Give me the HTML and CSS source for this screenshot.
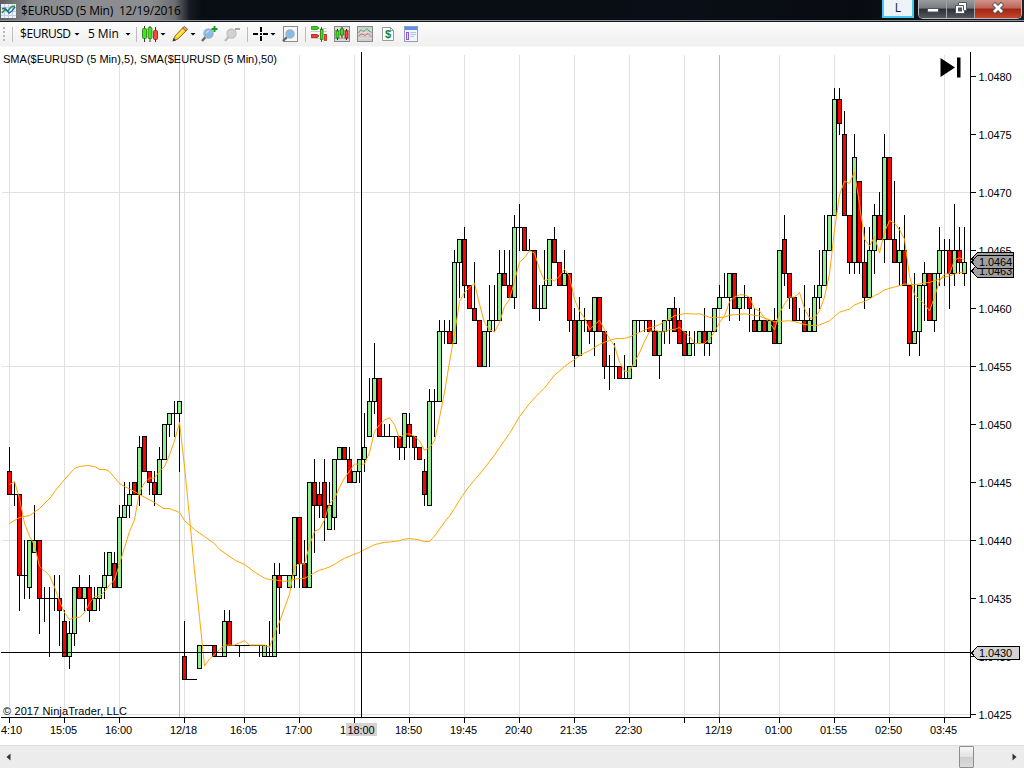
FILE: index.html
```html
<!DOCTYPE html>
<html lang="en">
<head>
    <meta charset="UTF-8">
    <meta name="viewport" content="width=device-width, initial-scale=1.0">
    <link rel="stylesheet" href="styles.css">
    <title>$EURUSD (5 Min) 12/19/2016</title>
</head>
<body>
    <div id="window">
        <div class="titlebar">
            <svg class="app-icon" width="15" height="14" viewBox="0 0 15 14">
                <rect width="15" height="14" fill="#eef2f8"/>
                <path d="M0 3.5H15M0 7.5H15M0 11.5H15M3.5 0V14M7.5 0V14M11.5 0V14" stroke="#c5cede" fill="none"/>
                <path d="M1 9L4 5.500L7 7L10 3L14 2" stroke="#2f9a3c" stroke-width="1.600" fill="none"/>
                <path d="M1 5L4 4L8 9L11 7L14 3" stroke="#2468b8" stroke-width="1.400" fill="none"/>
            </svg>
            <span class="title">$EURUSD (5 Min)&nbsp; 12/19/2016</span>
            <button class="link-btn">L</button>
            <div class="win-btns">
                <button class="win-btn"><svg width="12" height="14" viewBox="0 0 12 14"><rect x=".5" y="7.500" width="11" height="3.500" fill="#fff" stroke="#50545c"/></svg></button>
                <button class="win-btn"><svg width="12" height="14" viewBox="0 0 12 14"><path d="M3.5 1.5H11.500V9.500H9.500V12.500H.5V4.500H3.500Z" fill="#fff" stroke="#50545c"/><path d="M3.500 4.500H8.500V9.500" fill="none" stroke="#50545c"/><rect x="3.500" y="7" width="3" height="3" fill="#555" stroke="#50545c"/></svg></button>
                <button class="win-btn close"><svg width="12" height="14" viewBox="0 0 12 14"><path d="M1.500 2.500L10.500 11.500M10.500 2.500L1.500 11.500" stroke="#50545c" stroke-width="4.600"/><path d="M2 3L10 11M10 3L2 11" stroke="#fff" stroke-width="2.800"/></svg></button>
            </div>
        </div>
        <div class="toolbar">
            <span class="grip"></span>
            <span class="sep"></span>
            <span class="pick instrument">$EURUSD</span><i class="caret"></i>
            <span class="pick interval">5 Min</span><i class="caret"></i>
            <span class="sep sep-wide"></span>
            <svg class="icon" width="16" height="16" viewBox="0 0 16 16">
                <path d="M2.5 0V16M8 0V16M13.500 1V16" stroke="#333"/>
                <rect x=".5" y="2.500" width="4" height="10" rx="1" fill="#46e01c" stroke="#1f7a10" stroke-width=".8"/>
                <rect x="6" y="1.500" width="4" height="11" rx="1" fill="#46e01c" stroke="#1f7a10" stroke-width=".8"/>
                <rect x="11.500" y="4.500" width="4" height="9" rx="1" fill="#f5483c" stroke="#a01810" stroke-width=".8"/>
            </svg><i class="caret tight"></i>
            <svg class="icon pencil" width="16" height="16" viewBox="0 0 16 16">
                <path d="M1.500 14.500L3 10L11 1.500L14.500 4.500L6 13Z" fill="#ffcf14" stroke="#94702a"/>
                <path d="M4.500 11L12 3.500" stroke="#ffec70" stroke-width="1.500"/>
                <path d="M10.500 2L12.500 .5L15.500 3L14 5Z" fill="#e8a080" stroke="#94604c"/>
                <path d="M.5 15.500L1.500 12L4 14.500Z" fill="#333"/>
            </svg><i class="caret tight"></i>
            <svg class="icon zoom-in" width="17" height="16" viewBox="0 0 17 16">
                <path d="M1 15L5 10.500" stroke="#666" stroke-width="2.400"/>
                <circle cx="7.500" cy="7.500" r="4.500" fill="#84bdec" stroke="#9fb1c2" stroke-width="1.500"/>
                <path d="M5.500 7A3 3 0 0 1 8 4.800" stroke="#e3f3ff" fill="none"/>
                <path d="M13.500 0V6M10.500 3H16.500" stroke="#10a020" stroke-width="2"/>
            </svg>
            <svg class="icon zoom-out" width="17" height="16" viewBox="0 0 17 16">
                <path d="M1 15L5 10.500" stroke="#bbb" stroke-width="2.200"/>
                <circle cx="7.500" cy="7.500" r="4.500" fill="#d2d2d2" stroke="#c4c4c4" stroke-width="1.500"/>
                <path d="M11 3H16" stroke="#aaa" stroke-width="2"/>
            </svg>
            <span class="sep sep-cross"></span>
            <svg class="icon" width="15" height="16" viewBox="0 0 15 16">
                <path d="M8 1V6M8 10V15M0 8H5M10 8H15" stroke="#000" stroke-width="2"/>
                <rect x="7" y="7" width="2" height="2"/>
            </svg><i class="caret tight"></i>
            <svg class="icon lens" width="16" height="16" viewBox="0 0 16 16">
                <rect x="1.500" y=".5" width="14" height="15" fill="#f7f7f7" stroke="#8c8c8c"/>
                <path d="M1 15L5 11" stroke="#666" stroke-width="2.400"/>
                <circle cx="8" cy="8" r="4" fill="#84bdec" stroke="#9fb1c2" stroke-width="1.500"/>
            </svg>
            <span class="sep sep-last"></span>
            <svg class="icon" width="16" height="16" viewBox="0 0 16 16">
                <path d="M8 2.500H16M0 5.500H16M8 8.500H16M0 12.500H16" stroke="#ccc"/>
                <path d="M.5 .5H6L8 2L6 3.500H.5Z" fill="#3bd01c" stroke="#218a14" stroke-width=".8"/>
                <path d="M.5 8.500H6L8 10L6 11.500H.5Z" fill="#f04030" stroke="#a01810" stroke-width=".8"/>
                <path d="M10.500 1V16" stroke="#555"/>
                <rect x="9.500" y="3.500" width="2.500" height="10" fill="#46e01c" stroke="#1f7a10" stroke-width=".8"/>
                <rect x="13.500" y="8.500" width="2" height="6" fill="#f5483c" stroke="#c03020" stroke-width=".8"/>
            </svg>
            <svg class="icon" width="16" height="16" viewBox="0 0 16 16">
                <rect x=".5" y=".5" width="15" height="15" fill="#dadada" stroke="#888"/>
                <path d="M1 4.500H15M1 8.500H15M1 12.500H15" stroke="#b0b0b0"/>
                <path d="M3.500 3V14M8 1V12M12.500 3V14" stroke="#222"/>
                <rect x="2" y="5" width="3" height="7" fill="#46e01c" stroke="#1f7a10" stroke-width=".8"/>
                <rect x="6.500" y="3" width="3" height="6" fill="#46e01c" stroke="#1f7a10" stroke-width=".8"/>
                <rect x="11" y="5" width="3" height="7" fill="#f5483c" stroke="#a01810" stroke-width=".8"/>
            </svg>
            <svg class="icon" width="16" height="16" viewBox="0 0 16 16">
                <rect x=".5" y=".5" width="15" height="15" fill="#cfcfcf" stroke="#8a8a8a"/>
                <path d="M1 3.500H15M1 6.500H15M1 9.500H15M1 12.500H15" stroke="#dadada"/>
                <path d="M1.500 7L4 3.500L6 5.500L8 4.500L10 2.500L12 5L14.500 6.500" stroke="#46b070" fill="none"/>
                <path d="M1.500 10L5 8L8 9.500L11 7.500L14.500 11" stroke="#e06060" fill="none"/>
            </svg>
            <svg class="icon dollar" width="12" height="16" viewBox="0 0 12 16">
                <path d="M.5 1.500H8.500L11.500 4.500V14.500H.5Z" fill="#fff" stroke="#999"/>
                <path d="M8.500 1.500V4.500H11.500" fill="none" stroke="#999"/>
                <text x="6" y="12" text-anchor="middle">$</text>
            </svg>
            <svg class="icon" width="14" height="16" viewBox="0 0 14 16">
                <rect x=".5" y=".5" width="13" height="15" fill="#f2f5fc" stroke="#8c9cc4"/>
                <rect x="1" y="1" width="12" height="3" fill="#5b8fe8"/>
                <rect x="2.500" y="6.500" width="2" height="7" fill="#e4d4ff" stroke="#8a5ae0"/>
                <path d="M6.500 6.500H12M6.500 8.500H12M6.500 10.500H10" stroke="#a9c4ee"/>
            </svg>
        </div>
        <svg id="chart" width="1024" height="697" viewBox="0 48 1024 697"></svg>
        <div class="scrollbar">
            <svg class="arrow-left" width="5" height="8" viewBox="0 0 5 8"><path d="M4.500 .5V7.500L.5 4Z" fill="#333"/></svg>
            <span class="thumb"></span>
            <svg class="arrow-right" width="5" height="8" viewBox="0 0 5 8"><path d="M.5 .5V7.500L4.500 4Z" fill="#333"/></svg>
        </div>
    </div>
    <script src="chart.js"></script>
</body>
</html>
```

FILE: styles.css
```css
body {
    margin: 0;
    background: #fff;
    font-family: "Liberation Sans", Arial, sans-serif;
    overflow: hidden;
}
button {
    margin: 0;
    padding: 0;
    font-family: inherit;
}
#window {
    width: 1024px;
    height: 768px;
    display: flex;
    flex-direction: column;
}

/* title bar */
.titlebar {
    box-sizing: border-box;
    height: 22px;
    display: flex;
    align-items: flex-start;
    padding-left: 1px;
    background: linear-gradient(90deg, #5d5f62 0, #8b8d90 30px, #8b8d90 150px, #6b6e71 175px, rgba(30, 34, 40, 0.6) 190px, rgba(8, 12, 18, 0) 202px),
        linear-gradient(90deg, #080c12 0, #0a0f17 700px, #080b10 860px, #1c2026 1024px);
    border-bottom: 1px solid #16181b;
    box-shadow: inset 0 -1px 0 #8f9296;
}
.app-icon {
    margin-top: 4px;
}
.title {
    flex: 1;
    margin-left: 5px;
    line-height: 21px;
    font-family: "Open Sans", "Noto Sans", sans-serif;
    font-size: 12px;
    letter-spacing: -0.2px;
    color: #000;
}
.link-btn {
    box-sizing: border-box;
    width: 32px;
    height: 18px;
    margin-right: 4px;
    border: 2px solid #45c8f0;
    border-top: 0;
    background: #eef3f8;
    font-family: "Open Sans", sans-serif;
    font-size: 12px;
    line-height: 16px;
    color: #111c50;
}
.win-btns {
    box-sizing: border-box;
    display: flex;
    width: 104px;
    height: 19px;
    margin-right: 2px;
    border: 1px solid #b9bbbe;
    border-top: 0;
    border-radius: 0 0 5px 5px;
    overflow: hidden;
}
.win-btn {
    display: flex;
    justify-content: center;
    align-items: flex-start;
    width: 28px;
    padding-top: 1px;
    border: 0;
    border-right: 1px solid #a2a4a8;
    background: linear-gradient(#9a9b9e 0, #77797d 45%, #2c2f35 50%, #54575e 100%);
}
.win-btn.close {
    flex: 1;
    border-right: 0;
    background: linear-gradient(#d0928a 0, #bd6555 45%, #a02510 50%, #c5452d 100%);
}

/* toolbar */
.toolbar {
    display: flex;
    align-items: center;
    box-sizing: border-box;
    height: 26px;
    padding: 0 0 2px 3px;
    background: linear-gradient(#fcfcfc, #f0f0f0 24px, #fff 25px);
}
.grip {
    width: 2px;
    height: 15px;
    background: repeating-linear-gradient(#b8b8b8 0 2px, transparent 2px 4px);
}
.sep {
    width: 1px;
    height: 15px;
    margin: 0 7px 0 7px;
    background: #bcbcbc;
}
.sep-wide {
    margin: 0 5px 0 5px;
}
.sep-cross {
    margin: 0 5px 0 6px;
}
.sep-last {
    margin: 0 5px 0 7px;
}
.pick {
    font-family: "Open Sans", "Noto Sans", sans-serif;
    font-size: 12px;
    line-height: 20px;
    white-space: nowrap;
    color: #000;
}
.instrument {
    width: 49px;
    letter-spacing: -0.45px;
}
.interval {
    width: 32px;
    margin-left: 8px;
    letter-spacing: -0.1px;
}
.caret {
    width: 6px;
    height: 3px;
    margin-left: 5px;
    background: #000;
    clip-path: polygon(0 0, 100% 0, 50% 100%);
}
.caret.tight {
    margin-left: 2px;
}
.icon {
    flex: none;
}
.pencil {
    margin-left: 6px;
}
.zoom-in {
    margin: 0 6px 0 5px;
}
.lens {
    margin-left: 6px;
}
.sep-last ~ .icon + .icon {
    margin-left: 7px;
}
.sep-last ~ .icon + .icon.dollar {
    margin: 0 3px 0 9px;
}
.dollar text {
    font: bold 11px "Liberation Sans", Arial, sans-serif;
    fill: #17852b;
}

/* chart */
#chart {
    display: block;
    flex: none;
    shape-rendering: crispEdges;
}
#chart text {
    font-size: 11px;
    fill: #000;
}
.grid {
    fill: #e0e0e0;
}
.session {
    fill: #b8b8b8;
}
.ink {
    fill: #000;
}
.up {
    fill: #90ee90;
    stroke: #000;
}
.down {
    fill: #f00;
    stroke: #000;
}
.sma {
    fill: none;
    stroke: #ffa500;
    stroke-width: 1;
    shape-rendering: geometricPrecision;
}
.tag {
    fill: #a0a0a0;
    stroke: #000;
}
.tag.cursor,
.time-mark {
    fill: #d3d3d3;
}
.go-end {
    shape-rendering: geometricPrecision;
}

/* scrollbar */
.scrollbar {
    box-sizing: border-box;
    display: flex;
    align-items: center;
    height: 23px;
    padding: 0 7px 1px 6px;
    border-top: 1px solid #ddd;
    background: #ececec;
}
.arrow-left {
    margin-right: auto;
}
.thumb {
    box-sizing: border-box;
    width: 15px;
    height: 22px;
    margin-right: 38px;
    border: 1px solid #8e8e8e;
    border-radius: 1px;
    background: linear-gradient(#f6f6f6, #e2e2e2 50%, #cfcfd1 52%, #dadada);
}
```

FILE: chart.js
```js
// open, high, low, close in pips above 1.0400, one bar every 5px
const bars = `46 48 44 44|44 45 43 44|44 44 34 37|37 40 35 37|36 40 35 40|39 43 39 40|40 40 32 35|35 36 33 35|35 36 30 35|35 37 34 35
35 37 31 34|33 34 30 30|30 33 29 32|32 36 31 36|36 37 35 35|35 36 34 36|36 37 33 34|34 36 34 35|35 36 34 36|36 39 35 37
37 39 37 39|38 39 36 36|36 43 36 42|42 45 42 43|43 45 42 44|45 45 44 44|44 49 43 48|49 49 46 46|46 46 44 45|45 46 43 44
44 48 44 47|47 50 47 50|50 51 49 51|51 52 49 51|51 52 46 52|30 33 28 28|28 28 28 28|28 28 28 28|29 31 29 31|31 31 31 31
31 31 31 31|31 31 30 30|30 30 30 30|30 34 30 33|33 34 31 31|31 31 31 31|31 31 30 31|31 31 31 31|31 31 31 31|31 31 31 31
31 31 30 31|30 31 30 31|30 33 30 30|30 38 30 37|37 38 32 36|37 37 37 37|36 37 36 37|37 42 36 42|42 42 36 38|38 40 36 36
36 45 36 45|45 47 39 43|44 45 42 43|45 47 40 42|41 45 41 43|42 47 41 47|47 48 47 48|48 48 47 47|47 48 45 45|45 46 45 46
46 47 45 47|47 51 46 48|49 54 49 52|52 57 51 54|54 54 49 49|49 50 49 49|49 50 49 49|49 49 48 49|49 49 47 48|48 51 47 51
50 51 48 49|49 49 47 48|48 48 47 47|46 47 43 44|43 53 43 52|52 53 49 52|52 59 52 58|58 59 57 58|58 59 57 57|57 65 57 64
64 66 61 66|66 67 61 62|62 62 60 60|60 64 59 59|59 59 55 55|55 58 55 58|58 62 55 59|59 62 58 59|59 65 59 63|63 65 62 62
62 65 61 61|61 68 60 67|67 69 65 67|67 67 65 65|65 66 65 65|65 65 60 60|60 62 59 60|60 65 60 62|62 66 62 66|66 67 64 64
64 64 62 62|62 65 62 63|63 63 58 59|59 60 55 56|56 61 56 59|59 60 58 59|59 59 57 58|58 61 56 61|61 61 58 58|58 58 54 55
55 56 53 55|55 57 54 55|55 55 54 54|54 56 54 54|54 55 54 55|55 59 55 59|59 59 58 59|59 59 58 59|59 59 58 58|58 59 56 56
56 58 54 58|58 59 57 59|59 60 57 60|60 61 58 58|59 60 57 57|58 58 56 56|56 58 56 57|57 58 56 57|57 58 57 58|58 60 56 57
57 58 56 58|58 60 58 60|60 62 60 61|61 63 61 61|61 63 59 63|63 63 60 60|60 61 59 61|61 62 60 61|61 61 58 60|59 60 58 58
58 60 58 59|59 59 58 58|58 59 58 59|59 60 57 57|57 65 57 65|66 68 62 63|63 63 60 61|61 61 59 59|59 60 59 59|59 62 58 58
58 60 58 59|58 62 58 61|61 65 60 62|62 68 62 65|65 68 65 68|68 79 68 78|78 79 75 76|75 77 68 68|68 68 63 64|64 75 63 73
71 71 63 64|64 67 60 61|61 67 61 65|65 69 63 68|68 70 66 66|66 75 64 73|73 73 66 66|66 71 64 64|64 67 62 65|65 68 62 62
62 62 56 57|57 63 57 58|58 62 56 62|62 64 59 63|63 63 59 59|59 63 58 63|63 67 62 65|65 66 62 65|65 66 60 63|63 69 62 65
65 67 63 64|63 67 62 64`.split(/[|\n]/).map(b => b.split(" ").map(Number));

const py = p => Math.round(76.2 + (80 - p) * 11.6);
const bx = i => 9 + 5 * i;
let svg = "";

function rect(x, y, w, h, cls) {
    svg += `<rect x="${x}" y="${y}" width="${w}" height="${h}" class="${cls}"/>`;
}
function text(x, y, str, width, anchor) {
    svg += `<text x="${x}" y="${y}" textLength="${width}" text-anchor="${anchor || "start"}">${str}</text>`;
}

// grid
for (const p of [70, 55, 40, 25]) rect(2, py(p), 968, 1, "grid");
const times = [[9, ""], [64, "15:05"], [119, "16:00"], [184, "12/18"], [244, "16:05"], [299, "17:00"], [354, ""],
    [409, "18:50"], [464, "19:45"], [519, "20:40"], [574, "21:35"], [629, "22:30"], [684, ""], [719, "12/19"],
    [779, "01:00"], [834, "01:55"], [889, "02:50"], [944, "03:45"]];
for (const [x] of times) if (x != 719) rect(x, 55, 1, 662, "grid");
rect(179, 55, 1, 662, "session");
rect(719, 55, 1, 662, "session");

// candles
bars.forEach(([o, h, l, c], i) => {
    const x = bx(i);
    rect(x, py(h), 1, py(l) - py(h) + 1, "ink");
    if (o == c) {
        rect(x - 2, py(o), 5, 1, "ink");
    } else {
        const top = py(Math.max(o, c));
        rect(x - 1.5, top + 0.5, 4, py(Math.min(o, c)) - top, c > o ? "up" : "down");
    }
});

// moving averages, the first values come from bars left of the chart
function sma(n, lead) {
    const pts = lead.slice();
    for (let i = n - 1; i < bars.length; i++) {
        let sum = 0;
        for (let k = 0; k < n; k++) sum += bars[i - k][3];
        pts.push([bx(i), 76.2 + (80 - sum / n) * 11.6]);
    }
    svg += `<polyline class="sma" points="${pts.map(p => (p[0] + 0.5) + "," + (p[1] + 0.5).toFixed(1)).join(" ")}"/>`;
}
sma(5, [[9, 484], [14, 481], [19, 498], [24, 523]]);
sma(50, [[9, 523], [19, 517], [29, 515], [39, 508], [50, 497], [55, 490], [64, 479], [74, 468], [79, 466], [87, 465],
    [94, 466], [99, 469], [105, 469], [109, 471], [114, 477], [119, 483], [124, 486], [134, 491], [139, 494], [154, 502],
    [163, 508], [169, 508], [179, 512], [184, 520], [194, 529], [204, 536], [214, 543], [219, 549], [235, 560], [244, 564]]);

// axes
rect(1, 717, 970, 1, "ink");
rect(970, 52, 1, 666, "ink");
for (let p = 80; p >= 25; p -= 5) {
    rect(971, py(p), 5, 1, "ink");
    text(978.5, py(p) + 5, "1.04" + p, 33);
}
for (const [x, label] of times) {
    rect(x, 718, 1, 5, "ink");
    if (label) text(x - 0.5, 734, label, 27, "middle");
}
text(1, 734, "4:10", 21);
text(340, 734, "1", 6);

// crosshair
rect(361, 52, 1, 666, "ink");
rect(1, 652, 970, 1, "ink");
rect(346, 723, 31, 13, "time-mark");
text(347.5, 734, "18:00", 27);

// price tags
function tag(y, h, right, label, base, cls) {
    svg += `<path class="tag ${cls}" d="M971.5 ${y + h / 2}L977.500 ${y}H${right}V${y + h}H977.500Z"/>`;
    if (label) text(979, base, label, 33);
}
tag(252.5, 13, 1013.5, "", 0, "");
tag(264.5, 13, 1013.5, "1.0463", 275, "");
tag(255.5, 13, 1013.5, "1.0464", 266, "");
tag(646.5, 13, 1019.5, "1.0430", 657, "cursor");

text(3, 63, "SMA($EURUSD (5 Min),5), SMA($EURUSD (5 Min),50)", 274);
text(3, 715, "© 2017 NinjaTrader, LLC", 124);
svg += `<path class="go-end" d="M940.500 58V77L955 67.500Z"/><rect x="957" y="57.500" width="3.500" height="20" class="go-end"/>`;

document.getElementById("chart").innerHTML = svg;
```
